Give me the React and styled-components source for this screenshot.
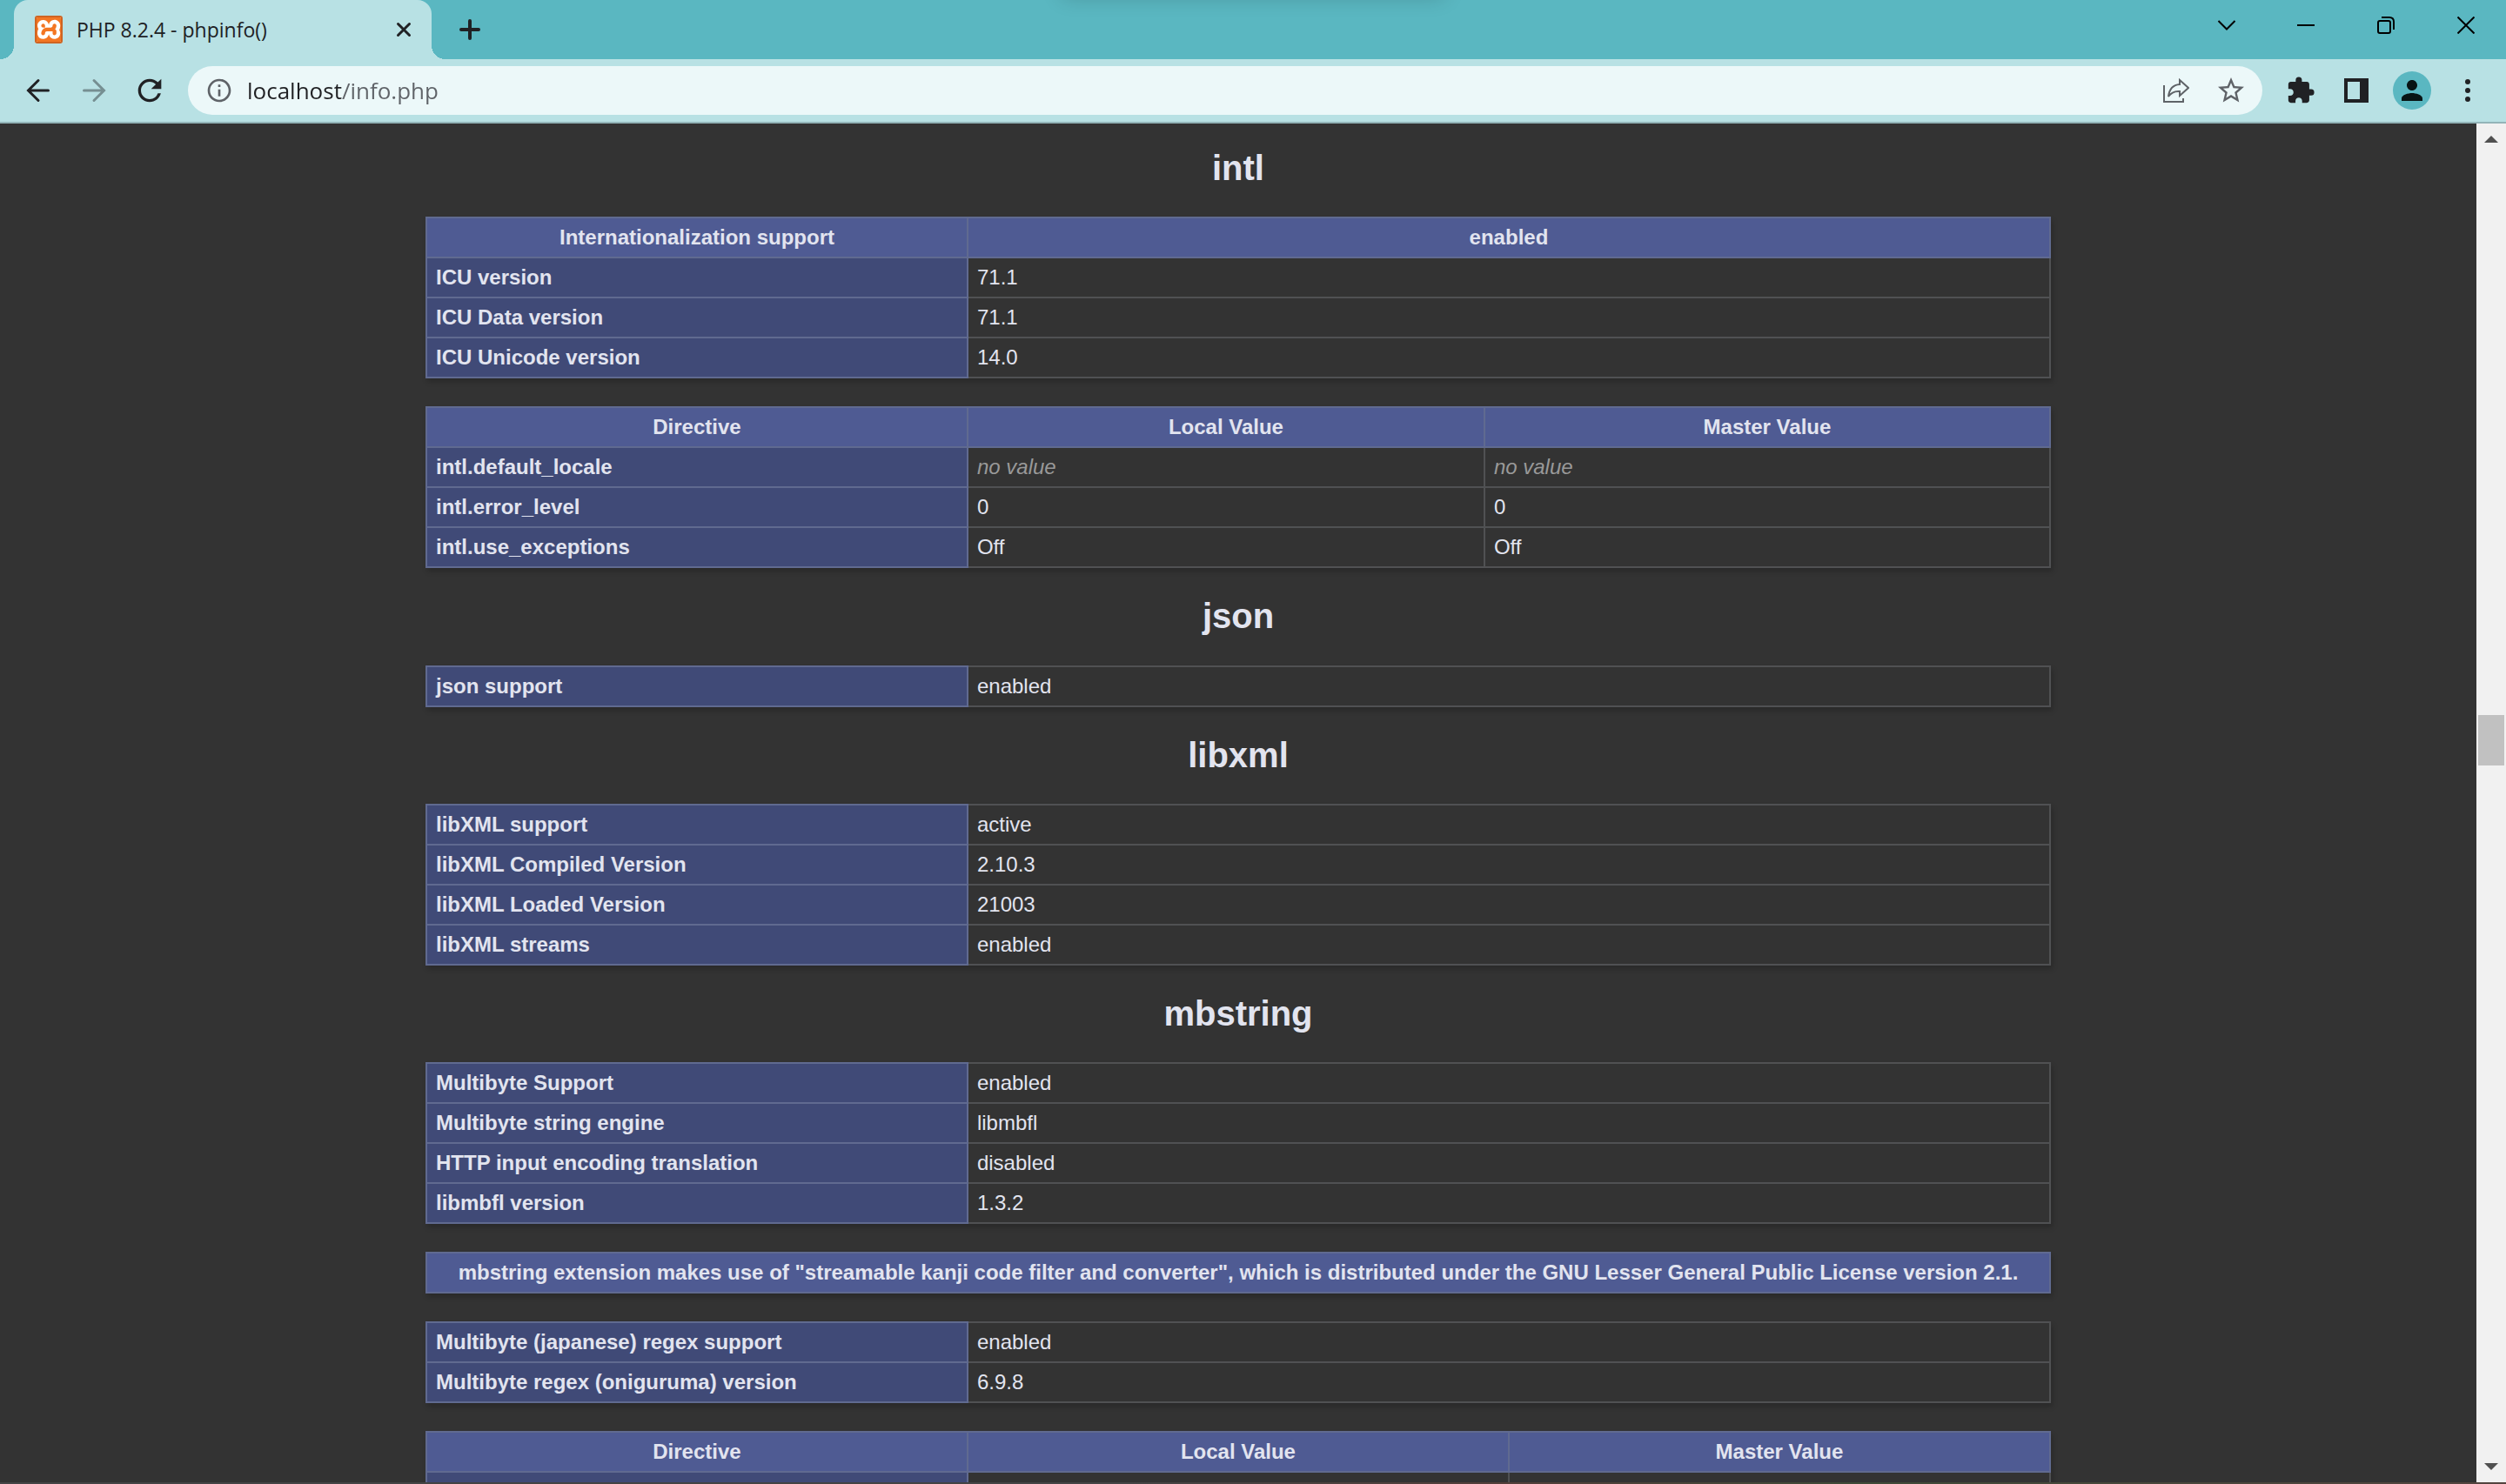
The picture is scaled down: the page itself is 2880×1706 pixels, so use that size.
import React from "react";
import styled, { createGlobalStyle, css } from "styled-components";
import { MdExtension, MdInfoOutline, MdPerson, MdRefresh, MdStarBorder } from "react-icons/md";
import { SiXampp } from "react-icons/si";

const color = {
  frame: "#5ab7c1",
  toolbar: "#b8e1e4",
  omnibox: "#ecf8f9",
  ink: "#202124",
  muted: "#5f6368",
  page: "#333333",
  text: "#e2e4ef",
  heading: "#4f5b93",
  entry: "#404a77",
  entryBorder: "#606a90",
  cellBorder: "#505153",
};

const uiFont = '"Open Sans", "Noto Sans", sans-serif';

const GlobalStyle = createGlobalStyle`
  * { box-sizing: border-box; }
  body { margin: 0; background: ${color.page}; }
`;

const Window = styled.div`
  display: flex;
  flex-direction: column;
  height: 100vh;
  overflow: hidden;
  font-family: ${uiFont};
`;

/* ---------- tab strip ---------- */

const TabStrip = styled.header`
  position: relative;
  display: flex;
  flex: none;
  height: 68px;
  padding-left: 16px;
  background: ${color.frame};
  overflow: hidden;

  &::before {
    content: "";
    position: absolute;
    left: 50%;
    top: -24px;
    width: 440px;
    height: 20px;
    transform: translateX(-50%);
    box-shadow: 0 0 24px rgba(0, 0, 0, 0.2);
  }
`;

const Tab = styled.div`
  position: relative;
  display: flex;
  align-items: center;
  width: 480px;
  padding: 0 16px 0 24px;
  border-radius: 16px 16px 0 0;
  background: ${color.toolbar};

  &::before,
  &::after {
    content: "";
    position: absolute;
    bottom: 0;
    width: 16px;
    height: 16px;
  }
  &::before {
    right: 100%;
    background: radial-gradient(circle at 0 0, transparent 16px, ${color.toolbar} 16px);
  }
  &::after {
    left: 100%;
    background: radial-gradient(circle at 100% 0, transparent 16px, ${color.toolbar} 16px);
  }
`;

const Favicon = styled.span`
  display: flex;
  flex: none;
  align-items: center;
  justify-content: center;
  width: 32px;
  height: 32px;
  border: 2px solid #cf6422;
  border-radius: 3px;
  overflow: hidden;
  background: #fff;
  color: #f37623;

  svg {
    flex: none;
  }
`;

const TabTitle = styled.span`
  flex: 1;
  margin-left: 16px;
  font-size: 23px;
  line-height: 32px;
  color: ${color.ink};
  white-space: nowrap;
`;

const IconButton = styled.button`
  display: flex;
  flex: none;
  align-items: center;
  justify-content: center;
  width: ${(p) => p.$width || 56}px;
  height: ${(p) => p.$height || 56}px;
  padding: 0;
  border: 0;
  background: none;
  color: ${(p) => p.$color || color.ink};
`;

const NewTab = styled(IconButton)`
  align-self: center;
  margin-left: 16px;
`;

const WindowControls = styled.div`
  display: flex;
  margin-left: auto;
`;

/* ---------- toolbar ---------- */

const Toolbar = styled.nav`
  display: flex;
  flex: none;
  align-items: center;
  gap: 8px;
  height: 74px;
  padding: 0 16px;
  border-bottom: 2px solid #93b5b8;
  background: ${color.toolbar};
`;

const Omnibox = styled.form`
  display: flex;
  flex: 1;
  align-items: center;
  gap: 8px;
  height: 56px;
  margin: 0 8px;
  padding: 0 8px;
  border-radius: 28px;
  background: ${color.omnibox};
`;

const Address = styled.input`
  flex: 1;
  min-width: 0;
  height: 40px;
  margin-left: -4px;
  padding: 0;
  border: 0;
  outline: 0;
  font-family: ${uiFont};
  font-size: 26px;
  color: ${color.ink};
  background: linear-gradient(90deg, ${color.ink} ${(p) => p.$hostWidth}px, ${color.muted} ${(p) => p.$hostWidth}px);
  background-clip: text;
  -webkit-text-fill-color: transparent;
`;

const Avatar = styled.span`
  display: flex;
  align-items: center;
  justify-content: center;
  width: 44px;
  height: 44px;
  border-radius: 50%;
  background: ${color.frame};
  color: #081414;
`;

/* ---------- page ---------- */

const Viewport = styled.div`
  display: flex;
  flex: 1;
  min-height: 0;
`;

const Page = styled.main`
  flex: 1;
  min-width: 0;
  padding-top: 29px;
  overflow: hidden;
  background: ${color.page};
  color: ${color.text};
  font-family: "Liberation Sans", Arial, sans-serif;
`;

const ModuleTitle = styled.h2`
  font-size: 40px;
  line-height: 45px;
  text-align: center;

  &:first-child {
    margin-top: 0;
  }
`;

const InfoTable = styled.table`
  width: 1868px;
  max-width: 100%;
  margin: 32px auto;
  border-collapse: collapse;
  table-layout: fixed;
  box-shadow: 2px 4px 6px rgba(0, 0, 0, 0.2);
`;

const Col = styled.col`
  width: ${(p) => p.$width};
`;

const cell = css`
  height: 46px;
  padding: 8px 10px;
  border: 2px solid ${color.cellBorder};
  font-size: 24px;
  line-height: 28px;
  vertical-align: baseline;
`;

const HeadCell = styled.th`
  ${cell}
  border-color: ${color.entryBorder};
  background: ${color.heading};
  text-align: center;
`;

const EntryCell = styled.th`
  ${cell}
  border-color: ${color.entryBorder};
  background: ${color.entry};
  text-align: left;
`;

const ValueCell = styled.td`
  ${cell}
  overflow-wrap: break-word;
`;

const NoValue = styled.i`
  color: #999;
`;

/* ---------- scrollbar ---------- */

const Scrollbar = styled.div`
  display: grid;
  flex: none;
  grid-template-rows: 34px 646fr 58px 790fr 34px;
  width: 34px;
  background: #f1f1f1;
`;

const Thumb = styled.div`
  grid-row: 3;
  margin: 0 2px;
  background: #c1c1c1;
`;

const ScrollArrow = styled(IconButton)`
  grid-row: ${(p) => p.$row};
`;

const ScreenEdge = styled.footer`
  flex: none;
  height: 2px;
  background: linear-gradient(90deg, #444444 45%, #533f3a 60%, #3f4a38 74%, #54443f);
`;

const Stroke = ({ size = 32, width = 2, round, children }) => (
  <svg
    width={size}
    height={size}
    viewBox={`0 0 ${size} ${size}`}
    fill="none"
    stroke="currentColor"
    strokeWidth={width}
    strokeLinecap={round ? "round" : "butt"}
    aria-hidden="true"
  >
    {children}
  </svg>
);

const THIRD = "33.33%";

const modules = [
  {
    name: "intl",
    tables: [
      {
        cols: [THIRD, "auto"],
        head: ["Internationalization support", "enabled"],
        rows: [
          ["ICU version", "71.1"],
          ["ICU Data version", "71.1"],
          ["ICU Unicode version", "14.0"],
        ],
      },
      {
        cols: [THIRD, "31.83%", "auto"],
        head: ["Directive", "Local Value", "Master Value"],
        rows: [
          ["intl.default_locale", null, null],
          ["intl.error_level", "0", "0"],
          ["intl.use_exceptions", "Off", "Off"],
        ],
      },
    ],
  },
  {
    name: "json",
    tables: [{ cols: [THIRD, "auto"], rows: [["json support", "enabled"]] }],
  },
  {
    name: "libxml",
    tables: [
      {
        cols: [THIRD, "auto"],
        rows: [
          ["libXML support", "active"],
          ["libXML Compiled Version", "2.10.3"],
          ["libXML Loaded Version", "21003"],
          ["libXML streams", "enabled"],
        ],
      },
    ],
  },
  {
    name: "mbstring",
    tables: [
      {
        cols: [THIRD, "auto"],
        rows: [
          ["Multibyte Support", "enabled"],
          ["Multibyte string engine", "libmbfl"],
          ["HTTP input encoding translation", "disabled"],
          ["libmbfl version", "1.3.2"],
        ],
      },
      {
        cols: ["auto"],
        head: [
          'mbstring extension makes use of "streamable kanji code filter and converter", which is distributed under the GNU Lesser General Public License version 2.1.',
        ],
        rows: [],
      },
      {
        cols: [THIRD, "auto"],
        rows: [
          ["Multibyte (japanese) regex support", "enabled"],
          ["Multibyte regex (oniguruma) version", "6.9.8"],
        ],
      },
      {
        cols: [THIRD, THIRD, "auto"],
        head: ["Directive", "Local Value", "Master Value"],
        rows: [["", "", ""]],
      },
    ],
  },
];

function DataTable({ cols, head, rows }) {
  return (
    <InfoTable>
      <colgroup>
        {cols.map((width, i) => (
          <Col key={i} $width={width} />
        ))}
      </colgroup>
      {head && (
        <thead>
          <tr>
            {head.map((label) => (
              <HeadCell key={label} scope="col">{label}</HeadCell>
            ))}
          </tr>
        </thead>
      )}
      <tbody>
        {rows.map(([entry, ...values], r) => (
          <tr key={r}>
            <EntryCell scope="row">{entry}</EntryCell>
            {values.map((value, i) => (
              <ValueCell key={i}>{value === null ? <NoValue>no value</NoValue> : value}</ValueCell>
            ))}
          </tr>
        ))}
      </tbody>
    </InfoTable>
  );
}

function BrowserTabs() {
  return (
    <TabStrip>
      <Tab>
        <Favicon>
          <SiXampp size={36} />
        </Favicon>
        <TabTitle>PHP 8.2.4 - phpinfo()</TabTitle>
        <IconButton $width={32} $height={32} aria-label="Close tab">
          <Stroke size={20} width={3} round>
            <path d="M3.5 3.5 16.5 16.5M16.5 3.5 3.5 16.5" />
          </Stroke>
        </IconButton>
      </Tab>
      <NewTab aria-label="New tab">
        <Stroke size={24} width={4} round>
          <path d="M12 2V22M2 12H22" />
        </Stroke>
      </NewTab>
      <WindowControls>
        <IconButton $width={90} $height={58} $color="#000" aria-label="Search tabs">
          <Stroke size={22}>
            <path d="M1.5 6 11 15.5 20.5 6" />
          </Stroke>
        </IconButton>
        <IconButton $width={92} $height={58} $color="#000" aria-label="Minimize">
          <Stroke size={20}>
            <path d="M0 10H20" />
          </Stroke>
        </IconButton>
        <IconButton $width={92} $height={58} $color="#000" aria-label="Restore">
          <Stroke size={20}>
            <rect x="1" y="5" width="14" height="14" rx="2" />
            <path d="M5 1H14Q19 1 19 6V15" />
          </Stroke>
        </IconButton>
        <IconButton $width={92} $height={58} $color="#000" aria-label="Close">
          <Stroke size={20}>
            <path d="M.5 .5 19.5 19.5M19.5 .5 .5 19.5" />
          </Stroke>
        </IconButton>
      </WindowControls>
    </TabStrip>
  );
}

function BrowserToolbar() {
  return (
    <Toolbar>
      <IconButton aria-label="Back">
        <Stroke size={28} width={3} round>
          <path d="M25.5 14H3M14 2.5 2.5 14 14 25.5" />
        </Stroke>
      </IconButton>
      <IconButton $color="#768f92" aria-label="Forward">
        <Stroke size={28} width={3} round>
          <path d="M2.5 14H25M14 2.5 25.5 14 14 25.5" />
        </Stroke>
      </IconButton>
      <IconButton aria-label="Reload">
        <MdRefresh size={40} />
      </IconButton>
      <Omnibox onSubmit={(e) => e.preventDefault()}>
        <IconButton type="button" $color={color.muted} aria-label="Site information">
          <MdInfoOutline size={32} />
        </IconButton>
        <Address aria-label="Address" defaultValue="localhost/info.php" spellCheck={false} $hostWidth={109} />
        <IconButton type="button" $color={color.muted} aria-label="Share">
          <Stroke size={32}>
            <path d="M3 10V29H25V25" />
            <path d="M21 4 31 13 21 22V17C15 16.5 11 18.5 8 23C9 15 13 9.5 21 9Z" />
          </Stroke>
        </IconButton>
        <IconButton type="button" $color={color.muted} aria-label="Bookmark">
          <MdStarBorder size={36} />
        </IconButton>
      </Omnibox>
      <IconButton aria-label="Extensions">
        <MdExtension size={34} />
      </IconButton>
      <IconButton aria-label="Side panel">
        <svg width="28" height="28" viewBox="0 0 28 28" fill="currentColor" fillRule="evenodd" aria-hidden="true">
          <path d="M0 0H28V28H0ZM4 4V24H18V4Z" />
        </svg>
      </IconButton>
      <IconButton aria-label="Profile">
        <Avatar>
          <MdPerson size={36} />
        </Avatar>
      </IconButton>
      <IconButton aria-label="Menu">
        <svg width="6" height="26" viewBox="0 0 6 26" fill="currentColor" aria-hidden="true">
          <circle cx="3" cy="3" r="3" />
          <circle cx="3" cy="13" r="3" />
          <circle cx="3" cy="23" r="3" />
        </svg>
      </IconButton>
    </Toolbar>
  );
}

function PageScrollbar() {
  return (
    <Scrollbar>
      <ScrollArrow $row={1} $width={34} $height={36} $color="#505050" aria-label="Scroll up">
        <svg width="16" height="8" viewBox="0 0 16 8" fill="currentColor" aria-hidden="true">
          <path d="M0 8 8 0 16 8Z" />
        </svg>
      </ScrollArrow>
      <Thumb />
      <ScrollArrow $row={5} $width={34} $height={32} $color="#505050" aria-label="Scroll down">
        <svg width="16" height="8" viewBox="0 0 16 8" fill="currentColor" aria-hidden="true">
          <path d="M0 0 8 8 16 0Z" />
        </svg>
      </ScrollArrow>
    </Scrollbar>
  );
}

export default function App() {
  return (
    <Window>
      <GlobalStyle />
      <BrowserTabs />
      <BrowserToolbar />
      <Viewport>
        <Page>
          {modules.map((module) => (
            <React.Fragment key={module.name}>
              <ModuleTitle>{module.name}</ModuleTitle>
              {module.tables.map((table, i) => (
                <DataTable key={i} {...table} />
              ))}
            </React.Fragment>
          ))}
        </Page>
        <PageScrollbar />
      </Viewport>
      <ScreenEdge />
    </Window>
  );
}
